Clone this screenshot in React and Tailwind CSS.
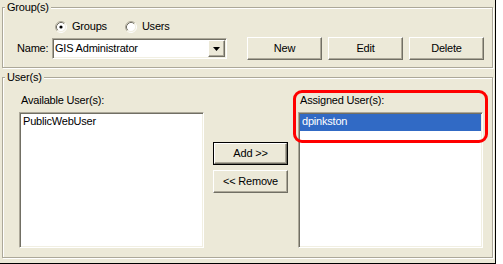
import React from "react";

const etched =
  "relative border border-[#ACA899] shadow-[inset_1px_1px_0_#fff,1px_1px_0_#fff]";
const sunken =
  "border border-t-[#ACA899] border-l-[#ACA899] border-r-white border-b-white shadow-[inset_1px_1px_0_#716F64,inset_-1px_-1px_0_#F1EFE2]";
const raised =
  "flex items-center justify-center bg-[#ECE9D8] border border-t-white border-l-white border-r-[#716F64] border-b-[#716F64] shadow-[inset_-1px_-1px_0_#ACA899]";

function Radio({ checked }) {
  return (
    <svg width="12" height="12" viewBox="0 0 12 12" className="shrink-0">
      <circle cx="6" cy="6" r="4.5" fill="#fff" />
      <path d="M2.11 9.89 A5.5 5.5 0 0 1 9.89 2.11" fill="none" stroke="#ACA899" />
      <path d="M2.82 9.18 A4.5 4.5 0 0 1 9.18 2.82" fill="none" stroke="#716F64" />
      <path d="M9.89 2.11 A5.5 5.5 0 0 1 2.11 9.89" fill="none" stroke="#fff" />
      <path d="M9.18 2.82 A4.5 4.5 0 0 1 2.82 9.18" fill="none" stroke="#F1EFE2" />
      {checked && <circle cx="6" cy="6" r="1.6" fill="#000" />}
    </svg>
  );
}

function Button({ children, isDefault }) {
  if (isDefault) {
    return (
      <div className="flex w-[75px] h-[23px] border border-black">
        <div className={`${raised} flex-1`}>{children}</div>
      </div>
    );
  }
  return <div className={`${raised} w-[75px] h-[23px]`}>{children}</div>;
}

function GroupBox({ label, className, children }) {
  return (
    <div className={`${etched} ${className}`}>
      <span className="absolute left-[2px] top-[-7px] bg-[#ECE9D8] px-[2px]">
        {label}
      </span>
      {children}
    </div>
  );
}

export default function App() {
  return (
    <div className="w-[503px] h-[264px] bg-white font-['Liberation_Sans',Arial,sans-serif] text-[11px] leading-[13px] tracking-[-0.2px] text-black">
      <div className="w-[496px] h-[264px] bg-[#ECE9D8] border-r border-b border-black pt-[7px] pl-[2px]">
        {/* Group(s) */}
        <GroupBox label="Group(s)" className="w-[491px] h-[61px] pt-[12px]">
          <div className="flex items-center h-[13px] pl-[52px]">
            <Radio checked />
            <span className="ml-[5px]">Groups</span>
            <span className="ml-[18px]">
              <Radio />
            </span>
            <span className="ml-[5px]">Users</span>
          </div>
          <div className="flex items-center h-[23px] mt-[4px] pl-[14px]">
            <span className="w-[35px]">Name:</span>
            <div className={`${sunken} flex items-center w-[175px] h-[21px] bg-white p-[1px]`}>
              <span className="flex-1 pl-[1px]">GIS Administrator</span>
              <div className={`${raised} w-[17px] h-[17px]`}>
                <svg width="7" height="4" viewBox="0 0 7 4">
                  <path d="M0 0h7L3.5 4z" fill="#000" />
                </svg>
              </div>
            </div>
            <div className="flex gap-[6px] ml-[20px]">
              <Button>New</Button>
              <Button>Edit</Button>
              <Button>Delete</Button>
            </div>
          </div>
        </GroupBox>

        {/* User(s) */}
        <GroupBox label="User(s)" className="w-[491px] h-[181px] mt-[9px] pt-[16px] pl-[16px]">
          <div className="flex">
            <div className="w-[185px]">
              <div className="h-[13px] pl-[2px]">Available User(s):</div>
              <div className={`${sunken} mt-[5px] h-[136px] bg-white p-[1px]`}>
                <div className="h-[17px] pt-[1px] pl-[2px]">PublicWebUser</div>
              </div>
            </div>
            <div className="flex flex-col gap-[5px] ml-[9px] pt-[48px]">
              <Button isDefault>Add &gt;&gt;</Button>
              <Button>&lt;&lt; Remove</Button>
            </div>
            <div className="relative w-[185px] ml-[10px]">
              <div className="h-[13px] pl-[2px]">Assigned User(s):</div>
              <div className={`${sunken} mt-[5px] h-[136px] bg-white p-[1px]`}>
                <div className="h-[17px] pt-[1px] pl-[2px] bg-[#316AC5] text-white">
                  dpinkston
                </div>
              </div>
              <div className="absolute left-[-5px] top-[-4px] w-[195px] h-[53px] border-[3px] border-[#FF0000] rounded-[9px]" />
            </div>
          </div>
        </GroupBox>
      </div>
    </div>
  );
}
